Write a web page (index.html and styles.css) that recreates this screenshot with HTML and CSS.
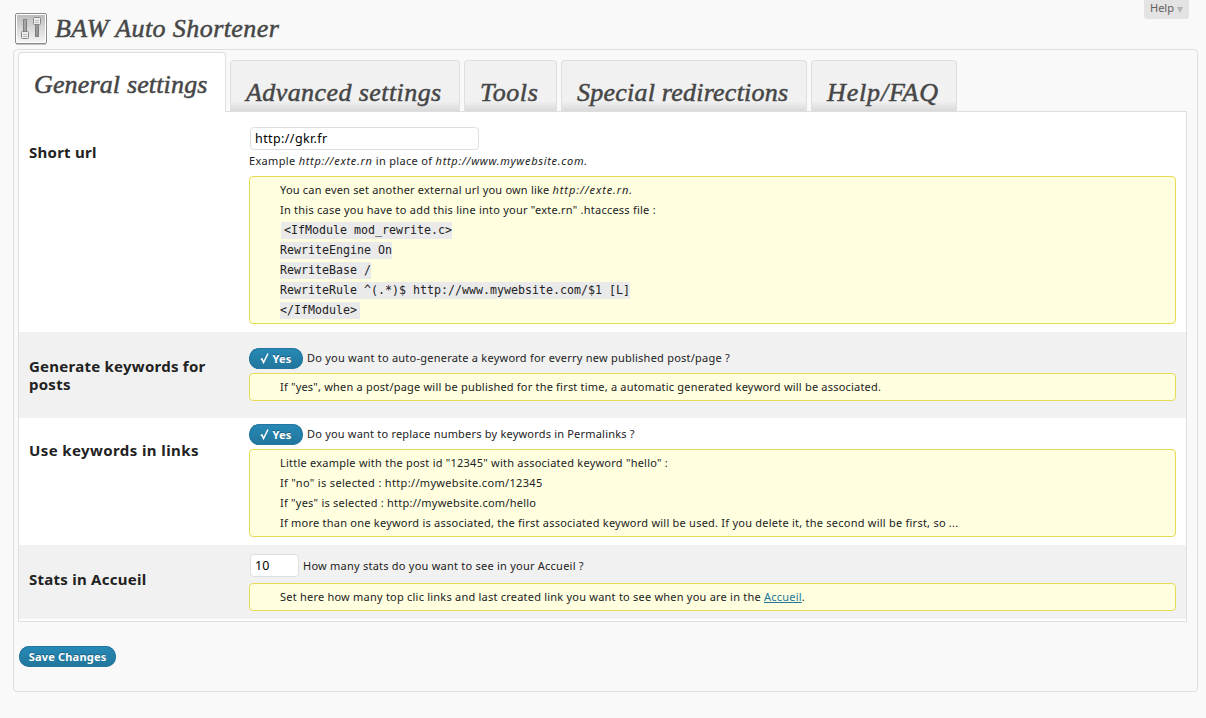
FILE: index.html
```
<!DOCTYPE html>
<html lang="en">
<head>
<meta charset="utf-8">
<title>BAW Auto Shortener</title>
<link rel="stylesheet" href="styles.css">
</head>
<body>
<header class="top">
  <svg class="logo" width="32" height="32" viewBox="0 0 32 32">
    <defs><linearGradient id="g" x1="0" y1="0" x2="0" y2="1"><stop offset="0" stop-color="#bdbdbd"/><stop offset="1" stop-color="#f4f4f4"/></linearGradient></defs>
    <rect x=".5" y=".5" width="31" height="30" rx="1.5" fill="#fff" stroke="#8c8c8c"/>
    <path d="M1 31.5h30" stroke="#c4c4c4"/>
    <rect x="2" y="2" width="28" height="27" fill="url(#g)"/>
    <rect x="8.500" y="6.500" width="3" height="15" fill="#a5a5a5" stroke="#808080"/>
    <rect x="20.500" y="9.500" width="3" height="14" fill="#999" stroke="#808080"/>
    <rect x="6.500" y="18.500" width="7" height="7" rx="1" fill="#eee" stroke="#888"/>
    <rect x="18.500" y="4.500" width="7" height="7" rx="1" fill="#eee" stroke="#888"/>
    <path d="M8 21.500h4M8 23.500h4M20 7.500h4M20 9.500h4" stroke="#bbb"/>
  </svg>
  <h1 class="title">BAW Auto Shortener</h1>
  <div class="help">Help <span class="arrow"></span></div>
</header>
<main class="wrap">
  <nav class="tabs">
    <a class="tab active t1"><span>General settings</span></a>
    <a class="tab t2"><span>Advanced settings</span></a>
    <a class="tab t3"><span>Tools</span></a>
    <a class="tab t4"><span>Special redirections</span></a>
    <a class="tab t5"><span>Help/FAQ</span></a>
  </nav>
  <section class="panel">
    <div class="row r1">
      <h3 class="label">Short url</h3>
      <div class="cell">
        <input class="field url" value="http://gkr.fr">
        <p class="example">Example <em>http://exte.rn</em> in place of <em>http://www.mywebsite.com.</em></p>
        <div class="note">
          <p>You can even set another external url you own like <em>http://exte.rn.</em></p>
          <p class="wide">In this case you have to add this line into your "exte.rn" .htaccess file :</p>
          <p><code>&lt;IfModule mod_rewrite.c&gt;<br>RewriteEngine On<br>RewriteBase /<br>RewriteRule ^(.*)$ http://www.mywebsite.com/$1 [L]<br>&lt;/IfModule&gt;</code></p>
        </div>
      </div>
    </div>
    <div class="row r2 alt">
      <h3 class="label">Generate keywords for posts</h3>
      <div class="cell">
        <div class="ask"><a class="button yes"><svg width="9" height="11" viewBox="0 0 9 11"><path d="M.8 6.500L2 6L3.500 9.500L8 .5" fill="none" stroke="#fff" stroke-width="1.500"/></svg>Yes</a><span class="q wide">Do you want to auto-generate a keyword for everry new published post/page ?</span></div>
        <div class="note"><p>If "yes", when a post/page will be published for the first time, a automatic generated keyword will be associated.</p></div>
      </div>
    </div>
    <div class="row r3">
      <h3 class="label">Use keywords in links</h3>
      <div class="cell">
        <div class="ask"><a class="button yes"><svg width="9" height="11" viewBox="0 0 9 11"><path d="M.8 6.500L2 6L3.500 9.500L8 .5" fill="none" stroke="#fff" stroke-width="1.500"/></svg>Yes</a><span class="q">Do you want to replace numbers by keywords in Permalinks ?</span></div>
        <div class="note">
          <p class="wide">Little example with the post id "12345" with associated keyword "hello" :</p>
          <p class="demo">If "no" is selected : http://mywebsite.com/12345</p>
          <p class="wide">If "yes" is selected : http://mywebsite.com/hello</p>
          <p class="wide">If more than one keyword is associated, the first associated keyword will be used. If you delete it, the second will be first, so ...</p>
        </div>
      </div>
    </div>
    <div class="row r4 alt">
      <h3 class="label">Stats in Accueil</h3>
      <div class="cell">
        <div class="ask stats"><input class="field num" value="10"><span class="wide">How many stats do you want to see in your Accueil ?</span></div>
        <div class="note"><p class="set">Set here how many top clic links and last created link you want to see when you are in the <a class="link">Accueil</a>.</p></div>
      </div>
    </div>
  </section>
  <a class="button save">Save Changes</a>
</main>
</body>
</html>
```
FILE: styles.css
```
* { box-sizing: border-box; }
body { margin: 0; height: 718px; overflow: hidden; background: #f9f9f9; color: #222; font: 11px/20px "Noto Sans", "Open Sans", sans-serif; letter-spacing: .2px; }
h1, h3, p { margin: 0; }
.top { display: flex; height: 49px; padding: 0 17px 0 15px; }
.logo { margin-top: 13px; }
.title, .tab { font: italic 26px/32px "Liberation Serif", serif; color: #464646; -webkit-text-stroke: .5px #464646; white-space: nowrap; letter-spacing: .42px; }
.title { margin: 13px 0 0 8px; }
.help { display: flex; align-items: center; justify-content: space-between; margin-left: auto; width: 45px; height: 19px; padding: 0 6px 3px; border-radius: 0 0 3px 3px; background: #e3e3e3; color: #606060; letter-spacing: 0; }
.arrow { margin-top: 4px; border: 3.5px solid transparent; border-top: 6px solid #b5b5b5; border-bottom: 0; }
.wrap { width: 1185px; height: 643px; margin-left: 13px; padding: 2px 10px 0 4px; border: 1px solid #dfdfdf; border-radius: 4px; }
.tabs { display: flex; align-items: flex-end; gap: 4px; height: 59px; }
.tab { height: 51px; padding: 16px 0 0 15px; border: 1px solid #dfdfdf; border-bottom: 0; border-radius: 4px 4px 0 0; background: linear-gradient(#f1f1f1 0, #f1f1f1 40px, #d9d9d9 50px); }
.tab.active { position: relative; height: 60px; margin-bottom: -1px; background: #fff; }
.t1 { width: 208px; letter-spacing: .15px; }
.t2 { width: 230px; }
.t3 { width: 93px; letter-spacing: .6px; }
.t4 { width: 246px; letter-spacing: .23px; }
.t5 { width: 146px; letter-spacing: .85px; }
.panel { width: 1169px; height: 511px; border: 1px solid #dfdfdf; background: #fff; }
.row { display: flex; padding: 0 10px; }
.alt { background: #f1f1f1; }
.r1 { height: 220px; padding-top: 15px; }
.r2 { height: 86px; padding-top: 15px; }
.r3 { height: 127px; padding-top: 5px; }
.r4 { height: 74px; padding-top: 9px; }
.label { width: 220px; padding-right: 20px; font-size: 15px; line-height: 18px; font-weight: 700; color: #222; letter-spacing: .25px; }
.r1 .label { padding-top: 16px; }
.r2 .label { padding-top: 10px; }
.r3 .label { padding-top: 18px; letter-spacing: .4px; }
.r4 .label { padding-top: 16px; }
.cell { flex: 1; white-space: nowrap; }
.field { display: block; margin: 0 0 0 1px; height: 23px; padding: 0 4px; border: 1px solid #dfdfdf; border-radius: 4px; background: #fff; color: #000; font: 12.5px "Noto Sans", sans-serif; }
.url { width: 229px; margin-bottom: 1px; letter-spacing: .4px; }
.num { width: 49px; }
.example { margin-bottom: 5px; letter-spacing: .32px; }
em { letter-spacing: .7px; }
.note em { letter-spacing: .9px; }
.note { padding: 3px 30px; border: 1px solid #e6db55; border-radius: 4px; background: #ffffe0; }
.wide { letter-spacing: .235px; }
.demo { letter-spacing: .33px; }
.set { letter-spacing: .22px; }
code { margin: 0 1px; padding: 1px 3px 2px; background: #eaeaea; font: 11.630px/20px "DejaVu Sans Mono", monospace; letter-spacing: 0; }
.ask { display: flex; align-items: center; gap: 4px; height: 23px; margin-bottom: 3px; }
.q { padding-bottom: 2px; }
.ask.stats { gap: 4px; margin-bottom: 6px; }
.button { display: flex; align-items: center; justify-content: center; height: 21px; border-radius: 11px; background: linear-gradient(#278ab7, #21759b); box-shadow: inset 0 0 0 1px #23769d; color: #fff; font-size: 11px; font-weight: 700; text-shadow: 0 -1px 0 rgba(0,0,0,.3); white-space: nowrap; }
.yes { gap: 3px; width: 54px; }
.save { width: 97px; margin: 24px 0 0 1px; }
.link { color: #21759b; text-decoration: underline; }
```
